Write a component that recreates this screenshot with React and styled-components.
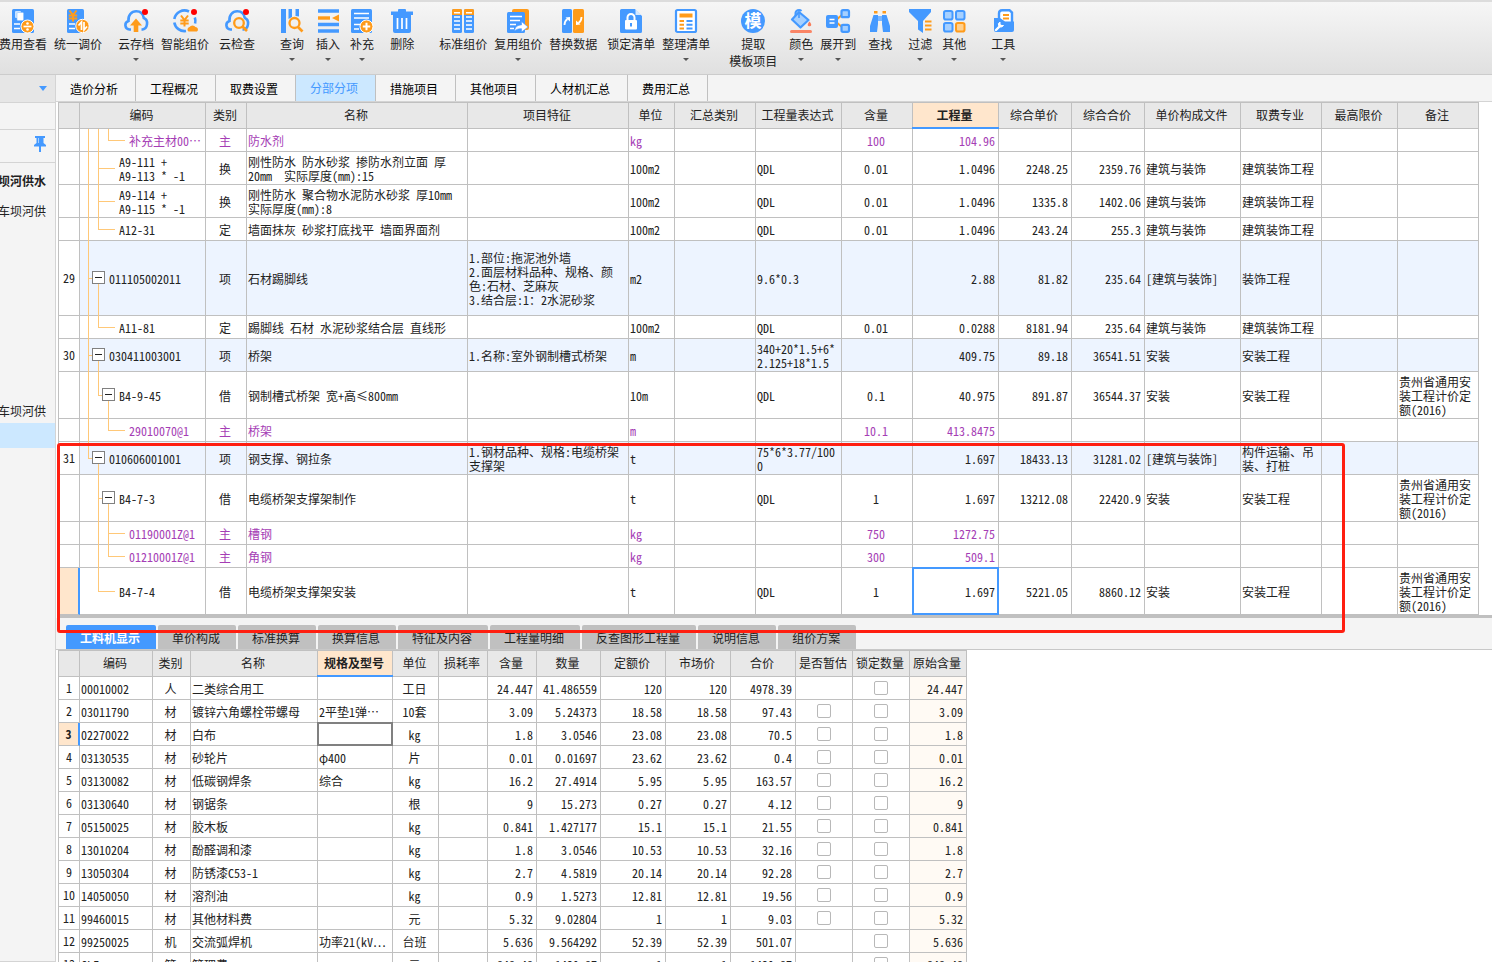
import React, { useState } from 'react'
import styled, { createGlobalStyle, css } from 'styled-components'

const BLUE = '#4499ff'
const ORANGE = '#ff9b1a'

/* ---------- toolbar icons ---------- */

const strokeBlue = { stroke: BLUE, fill: 'none' }
const strokeWhite = { stroke: '#fff', fill: 'none' }
const strokeOrange = { stroke: ORANGE, fill: 'none' }

const cloud = <path d="M7 20.500H5.500a4.400 4.400 0 0 1-1-8.600C3.800 6.500 7.500 2.200 12.200 2.200c4 0 7 2.600 7.600 6.800 5 2 4 10.500-1.300 11.500H17.500" {...strokeBlue} strokeWidth="2.600" />
const redDot = <circle cx="21" cy="3" r="3" fill="#ff0000" />
const yuan = <path d="M-3.500-5.500 0-1 3.500-5.500M0-1V5.500M-4.200-.500H4.200M-4.200 2.500H4.200" {...strokeOrange} strokeWidth="2" />

const icons = {
  fee: <>
    <rect x="1" y="0" width="22" height="24" rx="1.500" fill={BLUE} />
    <rect x="4" y="2" width="6" height="7" rx="1" fill="#cce4ff" />
    <rect x="6" y="3.500" width="6.500" height="8" rx="1" fill="#fff" stroke="#8cc2ff" strokeWidth=".6" />
    <path d="M3 15h6M3 19.500h6" {...strokeWhite} strokeWidth="1.700" />
    <circle cx="16.500" cy="17.500" r="6.500" fill={ORANGE} stroke="#fff" />
    <path d="M12.500 17.500h8" {...strokeWhite} strokeWidth="1.700" />
    <circle cx="16.500" cy="14.500" r="1.300" fill="#fff" /><circle cx="16.500" cy="20.500" r="1.300" fill="#fff" />
  </>,
  price: <>
    <rect x="1" y="0" width="17" height="24" rx="1.500" fill={BLUE} />
    <g transform="translate(7 7)">{yuan}</g>
    <path d="M3 15h6M3 19.500h6" {...strokeWhite} strokeWidth="1.700" />
    <circle cx="16.500" cy="17" r="6.700" fill={ORANGE} stroke="#fff" />
    <path d="M15.500 21v-8l-3 3.500M18 13v8l3-3.500" {...strokeWhite} strokeWidth="1.700" />
  </>,
  cloudSave: <>
    {cloud}
    <path d="M12 9.500 18 16.500H14.300V23H9.700V16.500H6z" fill={ORANGE} />
    {redDot}
  </>,
  smart: <>
    <path d="M16 2.500A10.300 10.300 0 0 0 1.300 10M1.300 13.500A10.300 10.300 0 0 0 13 22M21.800 8.500a10.300 10.300 0 0 1 .3 6" {...strokeBlue} strokeWidth="2.600" />
    <g transform="translate(11.500 12)">{yuan}</g>
    <path d="M15.500 22.500a2.500 2.500 0 0 1 1-4.500 3.600 3.600 0 0 1 6 0 2.500 2.500 0 0 1 1.500 4.500z" fill={ORANGE} />
    {redDot}
  </>,
  cloudCheck: <>
    {cloud}
    <circle cx="14" cy="14" r="6.500" fill="#eee" />
    <circle cx="14" cy="14" r="4.800" {...strokeOrange} strokeWidth="2.300" />
    <path d="m17.500 17.500 4.500 4.500" {...strokeOrange} strokeWidth="2.600" />
    {redDot}
  </>,
  query: <>
    <path d="M1 0h5v24H1zM8.500 0H12v8L8.500 10zM15.500 0H19v7.500l-3.500-.500z" fill={BLUE} />
    <circle cx="14.500" cy="14" r="5" {...strokeOrange} strokeWidth="2.300" />
    <path d="m18 18 4.500 4.500" {...strokeOrange} strokeWidth="2.700" />
  </>,
  insert: <>
    <path d="M2 2h21M2 15.500h21M2 22h21" {...strokeBlue} strokeWidth="3.600" />
    <path d="M2 9h12" {...strokeOrange} strokeWidth="3.400" />
    <path d="M16 9 23 5.500v7z" fill={ORANGE} />
  </>,
  supplement: <>
    <rect x="1" y="0" width="21" height="24" rx="1.500" fill={BLUE} />
    <path d="M4 4.500h15M4 9h15M4 15.500h7M4 20h5" {...strokeWhite} strokeWidth="1.700" />
    <circle cx="16.500" cy="17.500" r="6.500" fill={ORANGE} stroke="#fff" />
    <path d="M12.800 17.500h7.400M16.500 13.800v7.400" {...strokeWhite} strokeWidth="2" />
  </>,
  trash: <>
    <path d="M1 2.500h7V1a1 1 0 0 1 1-1h6a1 1 0 0 1 1 1v1.500h7V6H1zM3 6h18v16a2 2 0 0 1-2 2H5a2 2 0 0 1-2-2z" fill={BLUE} />
    <path d="M7.500 9v11M12 9v11M16.500 9v11" {...strokeWhite} strokeWidth="1.700" />
  </>,
  standard: <>
    <rect x="1" y="0" width="10" height="24" rx="1.500" fill={BLUE} /><rect x="13" y="0" width="10" height="24" rx="1.500" fill={BLUE} />
    <path d="M1 6V1.500Q1 0 2.500 0h7Q11 0 11 1.500V6zM13 6V1.500Q13 0 14.500 0h7Q23 0 23 1.500V6z" fill={ORANGE} />
    <path d="M3 3.700h6M15 3.700h6M3 8h6M15 8h6M3 12h6M15 12h6M3 16h6M15 16h6M3 20h6M15 20h6" {...strokeWhite} strokeWidth="1.500" />
  </>,
  reuse: <>
    <rect x="6" y="0" width="17" height="21" rx="2" fill={ORANGE} />
    <rect x="1" y="3" width="18" height="21" rx="1.500" fill={BLUE} />
    <path d="M4 7.500h12M4 11.500h10M4 15.500h6M4 19.500h4" {...strokeWhite} strokeWidth="1.700" />
    <path d="M8.500 22c.5-4 3-6 7-6v-3.500l6.500 5.500-6.500 5v-3.300c-3 0-5 .5-7 2.300z" fill="#fff" stroke={BLUE} strokeWidth=".6" />
  </>,
  replace: <>
    <rect x="1" y="0" width="10" height="24" rx="1.500" fill={BLUE} /><rect x="12" y="0" width="11" height="24" rx="1.500" fill={ORANGE} />
    <path d="M3.500 16c0-3 .8-4.500 3-6" {...strokeWhite} strokeWidth="1.800" />
    <path d="M4.500 8.500 9 8v4.500z" fill="#fff" />
    <path d="M20.500 8c0 3-.8 4.500-3 6" {...strokeWhite} strokeWidth="1.800" />
    <path d="m19.500 15.500-4.500.5v-4.500z" fill="#fff" />
  </>,
  lock: <>
    <path d="M2.500 0H16l7 7v15.500a1.500 1.500 0 0 1-1.500 1.500h-19A1.500 1.500 0 0 1 1 22.500v-21A1.500 1.500 0 0 1 2.500 0z" fill={BLUE} />
    <path d="M16.500 0 22.500 6h-6z" fill="#d4e8ff" />
    <rect x="6" y="11" width="12" height="9.500" rx="1" fill="#fff" />
    <path d="M8.500 11V8.500a3.500 3.500 0 0 1 7 0V11" {...strokeWhite} strokeWidth="2" />
    <path d="M12 14v3.500" {...strokeBlue} strokeWidth="2" />
  </>,
  arrange: <>
    <rect x="2" y="1" width="20" height="22" rx="1.500" fill="#fff" stroke={BLUE} strokeWidth="2.200" />
    <rect x="5.500" y="4.500" width="13" height="4" fill={ORANGE} />
    <path d="M5.500 12H10M5.500 15.700H10M5.500 19.400H10" {...strokeOrange} strokeWidth="2" />
    <path d="M12.500 12h6M12.500 15.700h6M12.500 19.400h6" {...strokeBlue} strokeWidth="2" />
  </>,
  template: <>
    <circle cx="12" cy="12" r="12" fill={BLUE} />
    <text x="12" y="18" textAnchor="middle" fontSize="17" fontWeight="700" fill="#fff">模</text>
  </>,
  fill: <>
    <path d="M6.500 8V4.500a3.500 3.500 0 0 1 6-2.500" {...strokeBlue} strokeWidth="2" />
    <path d="m10 3 9.500 8-8 7.500-8.500-8z" fill="#a6d0ff" stroke={BLUE} strokeWidth="2.200" strokeLinejoin="round" />
    <path d="M10 3v6" {...strokeBlue} strokeWidth="1.600" />
    <path d="M20.500 12.500c3 3.500 1.500 4.800 0 4.800s-3-1.300 0-4.800z" fill="#f97d5b" />
    <rect x="1" y="21" width="22" height="3" rx="1.500" fill="#fa8566" />
  </>,
  expand: <>
    <path d="M9 12 17 5M9 12l8 7" {...strokeOrange} strokeWidth="2" />
    <rect x="0" y="6" width="12" height="13" rx="2" fill={BLUE} />
    <path d="M3.500 10.500h5M3.500 14h5" {...strokeWhite} strokeWidth="1.600" />
    <rect x="15.500" y="1.200" width="7.500" height="7" rx="1.500" fill="#a6d0ff" stroke={BLUE} strokeWidth="2.200" />
    <rect x="15.500" y="15.800" width="7.500" height="7" rx="1.500" fill="#a6d0ff" stroke={BLUE} strokeWidth="2.200" />
  </>,
  find: <>
    <path d="M5.500 6H10v9l-1 8H2V17zM14 6h4.500L22 17v6h-7l-1-8z" fill={BLUE} />
    <path d="M6 2h3.500v2.500H6zM14.500 2H18v2.500h-3.500z" fill={ORANGE} />
    <path d="M10 7h4v5h-4z" fill="#79b6ff" />
  </>,
  filter: <>
    <path d="M1 0h22v3L15 12v12l-5-3.500V12L1 3z" fill={BLUE} />
    <path d="M17 12.500h6.500M17 16.500h6.500M17 20.500h6.500" {...strokeOrange} strokeWidth="2" />
  </>,
  other: <>
    {[[2, 2], [14, 2], [2, 14]].map(([x, y]) => (
      <rect key={`${x}-${y}`} x={x} y={y} width="8.500" height="8.500" rx="1.800" fill="#a6d0ff" stroke={BLUE} strokeWidth="2" />
    ))}
    <rect x="14" y="14" width="8.500" height="8.500" rx="1.800" fill="#ffd08f" stroke={ORANGE} strokeWidth="2" />
  </>,
  tools: <>
    <path d="M8 12V4.500Q8 1.200 11 1.200h7.500L21 3.500V13" fill="#fff" stroke={BLUE} strokeWidth="2.400" />
    <path d="M12 6h6M12 9.500h6" {...strokeOrange} strokeWidth="2" />
    <path d="M3 9h6l5 3.500h9V21a2 2 0 0 1-2 2H5a2 2 0 0 1-2-2z" fill={BLUE} />
    <path d="M5 21 9.500 16.500" {...strokeWhite} strokeWidth="2.400" strokeLinecap="round" />
    <path d="M9 13v3.500h3.500a3 3 0 0 1-4.500.8A3 3 0 0 1 9 13z" fill="#fff" stroke="#fff" />
  </>,
}

// gap = space in front of the tool
const tools = [
  { label: '费用查看', icon: 'fee', gap: 0 },
  { label: '统一调价', icon: 'price', gap: 7, arrow: true },
  { label: '云存档', icon: 'cloudSave', gap: 16, arrow: true },
  { label: '智能组价', icon: 'smart', gap: 7 },
  { label: '云检查', icon: 'cloudCheck', gap: 10 },
  { label: '查询', icon: 'query', gap: 25, arrow: true },
  { label: '插入', icon: 'insert', gap: 12, arrow: true },
  { label: '补充', icon: 'supplement', gap: 10, arrow: true },
  { label: '删除', icon: 'trash', gap: 16 },
  { label: '标准组价', icon: 'standard', gap: 25 },
  { label: '复用组价', icon: 'reuse', gap: 7, arrow: true },
  { label: '替换数据', icon: 'replace', gap: 7 },
  { label: '锁定清单', icon: 'lock', gap: 10 },
  { label: '整理清单', icon: 'arrange', gap: 7, arrow: true },
  { label: '提取', second: '模板项目', icon: 'template', gap: 19 },
  { label: '颜色', icon: 'fill', gap: 12, arrow: true },
  { label: '展开到', icon: 'expand', gap: 7, arrow: true },
  { label: '查找', icon: 'find', gap: 12 },
  { label: '过滤', icon: 'filter', gap: 16, arrow: true },
  { label: '其他', icon: 'other', gap: 10, arrow: true },
  { label: '工具', icon: 'tools', gap: 25, arrow: true },
]

const pageTabs = ['造价分析', '工程概况', '取费设置', '分部分项', '措施项目', '其他项目', '人材机汇总', '费用汇总']
const detailTabs = ['工料机显示', '单价构成', '标准换算', '换算信息', '特征及内容', '工程量明细', '反查图形工程量', '说明信息', '组价方案']

/* ---------- upper grid ---------- */

const itemCols = [
  { title: '', width: 21, align: 'center' },
  { title: '编码', width: 126 },
  { title: '类别', width: 41, align: 'center' },
  { title: '名称', width: 221 },
  { title: '项目特征', width: 161 },
  { title: '单位', width: 46 },
  { title: '汇总类别', width: 81 },
  { title: '工程量表达式', width: 86 },
  { title: '含量', width: 71, align: 'center' },
  { title: '工程量', width: 86, align: 'right' },
  { title: '综合单价', width: 73, align: 'right' },
  { title: '综合合价', width: 73, align: 'right' },
  { title: '单价构成文件', width: 96 },
  { title: '取费专业', width: 81 },
  { title: '最高限价', width: 76 },
  { title: '备注', width: 81 },
]

const REMARK = '贵州省通用安\n装工程计价定\n额(2016)'

// guides: one entry per tree level, [level, 'full' | 'end' | 'start']
// cells: 类别 名称 项目特征 单位 汇总类别 表达式 含量 工程量 单价 合价 构成文件 专业 限价 备注
const itemRows = [
  { h: 23, level: 3, kind: 'main', code: '补充主材00⋯', guides: [[1, 'full'], [2, 'full'], [3, 'end']],
    cells: ['主', '防水剂', '', 'kg', '', '', '100', '104.96', '', '', '', '', '', ''] },
  { h: 33, level: 2, code: 'A9-111 +\nA9-113 * -1', guides: [[1, 'full'], [2, 'full']],
    cells: ['换', '刚性防水 防水砂浆 掺防水剂立面 厚\n20mm  实际厚度(mm):15', '', '100m2', '', 'QDL', '0.01', '1.0496', '2248.25', '2359.76', '建筑与装饰', '建筑装饰工程', '', ''] },
  { h: 33, level: 2, code: 'A9-114 +\nA9-115 * -1', guides: [[1, 'full'], [2, 'full']],
    cells: ['换', '刚性防水 聚合物水泥防水砂浆 厚10mm\n实际厚度(mm):8', '', '100m2', '', 'QDL', '0.01', '1.0496', '1335.8', '1402.06', '建筑与装饰', '建筑装饰工程', '', ''] },
  { h: 23, level: 2, code: 'A12-31', guides: [[1, 'full'], [2, 'end']],
    cells: ['定', '墙面抹灰 砂浆打底找平 墙面界面剂', '', '100m2', '', 'QDL', '0.01', '1.0496', '243.24', '255.3', '建筑与装饰', '建筑装饰工程', '', ''] },
  { h: 75, no: '29', level: 1, kind: 'item', open: true, code: '011105002011', guides: [[1, 'full'], [2, 'start']],
    cells: ['项', '石材踢脚线', '1.部位:拖泥池外墙\n2.面层材料品种、规格、颜\n色:石材、芝麻灰\n3.结合层:1：2水泥砂浆', 'm2', '', '9.6*0.3', '', '2.88', '81.82', '235.64', '[建筑与装饰]', '装饰工程', '', ''] },
  { h: 23, level: 2, code: 'A11-81', guides: [[1, 'full'], [2, 'end']],
    cells: ['定', '踢脚线 石材 水泥砂浆结合层 直线形', '', '100m2', '', 'QDL', '0.01', '0.0288', '8181.94', '235.64', '建筑与装饰', '建筑装饰工程', '', ''] },
  { h: 33, no: '30', level: 1, kind: 'item', open: true, code: '030411003001', guides: [[1, 'full'], [2, 'start']],
    cells: ['项', '桥架', '1.名称:室外钢制槽式桥架', 'm', '', '340+20*1.5+6*\n2.125+18*1.5', '', '409.75', '89.18', '36541.51', '安装', '安装工程', '', ''] },
  { h: 47, level: 2, open: true, code: 'B4-9-45', guides: [[1, 'full'], [2, 'end'], [3, 'start']],
    cells: ['借', '钢制槽式桥架 宽+高≤800mm', '', '10m', '', 'QDL', '0.1', '40.975', '891.87', '36544.37', '安装', '安装工程', '', REMARK] },
  { h: 23, level: 3, kind: 'main', code: '29010070@1', guides: [[1, 'full'], [3, 'end']],
    cells: ['主', '桥架', '', 'm', '', '', '10.1', '413.8475', '', '', '', '', '', ''] },
  { h: 33, no: '31', level: 1, kind: 'item', open: true, code: '010606001001', guides: [[1, 'end'], [2, 'start']],
    cells: ['项', '钢支撑、钢拉条', '1.钢材品种、规格:电缆桥架\n支撑架', 't', '', '75*6*3.77/100\n0', '', '1.697', '18433.13', '31281.02', '[建筑与装饰]', '构件运输、吊\n装、打桩', '', ''] },
  { h: 47, level: 2, open: true, code: 'B4-7-3', guides: [[2, 'full'], [3, 'start']],
    cells: ['借', '电缆桥架支撑架制作', '', 't', '', 'QDL', '1', '1.697', '13212.08', '22420.9', '安装', '安装工程', '', REMARK] },
  { h: 23, level: 3, kind: 'main', code: '01190001Z@1', guides: [[2, 'full'], [3, 'full']],
    cells: ['主', '槽钢', '', 'kg', '', '', '750', '1272.75', '', '', '', '', '', ''] },
  { h: 23, level: 3, kind: 'main', code: '01210001Z@1', guides: [[2, 'full'], [3, 'end']],
    cells: ['主', '角钢', '', 'kg', '', '', '300', '509.1', '', '', '', '', '', ''] },
  { h: 47, level: 2, current: true, code: 'B4-7-4', guides: [[2, 'end']],
    cells: ['借', '电缆桥架支撑架安装', '', 't', '', 'QDL', '1', '1.697', '5221.05', '8860.12', '安装', '安装工程', '', REMARK] },
]

/* ---------- lower grid ---------- */

const resourceCols = [
  { title: '', width: 21, align: 'center' },
  { title: '编码', width: 73 },
  { title: '类别', width: 38, align: 'center' },
  { title: '名称', width: 127 },
  { title: '规格及型号', width: 75 },
  { title: '单位', width: 46, align: 'center' },
  { title: '损耗率', width: 49 },
  { title: '含量', width: 49, align: 'right' },
  { title: '数量', width: 64, align: 'right' },
  { title: '定额价', width: 65, align: 'right' },
  { title: '市场价', width: 65, align: 'right' },
  { title: '合价', width: 65, align: 'right' },
  { title: '是否暂估', width: 57, align: 'center' },
  { title: '锁定数量', width: 57, align: 'center' },
  { title: '原始含量', width: 57, align: 'right' },
]

// code, kind, name, spec, unit, content, amount, quota price, market price, total, can be estimated
const resources = [
  ['00010002', '人', '二类综合用工', '', '工日', '24.447', '41.486559', '120', '120', '4978.39', false],
  ['03011790', '材', '镀锌六角螺栓带螺母', '2平垫1弹⋯', '10套', '3.09', '5.24373', '18.58', '18.58', '97.43', true],
  ['02270022', '材', '白布', '', 'kg', '1.8', '3.0546', '23.08', '23.08', '70.5', true],
  ['03130535', '材', '砂轮片', 'φ400', '片', '0.01', '0.01697', '23.62', '23.62', '0.4', true],
  ['03130082', '材', '低碳钢焊条', '综合', 'kg', '16.2', '27.4914', '5.95', '5.95', '163.57', true],
  ['03130640', '材', '钢锯条', '', '根', '9', '15.273', '0.27', '0.27', '4.12', true],
  ['05150025', '材', '胶木板', '', 'kg', '0.841', '1.427177', '15.1', '15.1', '21.55', true],
  ['13010204', '材', '酚醛调和漆', '', 'kg', '1.8', '3.0546', '10.53', '10.53', '32.16', true],
  ['13050304', '材', '防锈漆C53-1', '', 'kg', '2.7', '4.5819', '20.14', '20.14', '92.28', true],
  ['14050050', '材', '溶剂油', '', 'kg', '0.9', '1.5273', '12.81', '12.81', '19.56', true],
  ['99460015', '材', '其他材料费', '', '元', '5.32', '9.02804', '1', '1', '9.03', true],
  ['99250025', '机', '交流弧焊机', '功率21(kV⋯', '台班', '5.636', '9.564292', '52.39', '52.39', '501.07', false],
  ['GLF', '管', '管理费', '', '元', '848.48', '1439.87', '1', '1', '1439.87', false],
]

function Toolbar() {
  return (
    <ToolbarStyles>
      {tools.map(t => (
        <ToolButton key={t.label} type="button" $gap={t.gap}>
          <svg width="24" height="24" viewBox="0 0 24 24" aria-hidden="true">{icons[t.icon]}</svg>
          <span>{t.label}</span>
          {t.second && <span>{t.second}</span>}
          {t.arrow && <Caret />}
        </ToolButton>
      ))}
    </ToolbarStyles>
  )
}

function Header({ cols, active }) {
  return (
    <>
      <colgroup>
        {cols.map((c, i) => <col key={i} width={c.width} />)}
      </colgroup>
      <thead>
        <tr>
          {cols.map((c, i) => <HeadCell key={i} scope="col" $active={c.title === active}>{c.title}</HeadCell>)}
        </tr>
      </thead>
    </>
  )
}

function TreeCode({ row }) {
  const [open, setOpen] = useState(true)
  return (
    <TreeCell $level={row.level}>
      {row.guides.map(([level, part]) => <Guide key={level} $level={level} $part={part} />)}
      <Branch $level={row.level} />
      {row.open && (
        <Expander type="button" aria-label={row.code} aria-expanded={open} $level={row.level} onClick={() => setOpen(!open)}>
          <svg width="7" height="7" viewBox="0 0 7 7"><path d={open ? 'M0 3.500h7' : 'M0 3.500h7M3.500 0v7'} stroke="#222" /></svg>
        </Expander>
      )}
      {row.code}
    </TreeCell>
  )
}

function ItemGrid() {
  return (
    <Grid $width={1421}>
      <Header cols={itemCols} active="工程量" />
      <tbody>
        {itemRows.map(row => (
          <Row key={row.code} $height={row.h} $kind={row.kind}>
            <NumberCell $current={row.current}>{row.no}</NumberCell>
            <TreeCode row={row} />
            {row.cells.map((text, i) => (
              <Cell key={i} $align={itemCols[i + 2].align} $frame={row.current && i === 7 ? BLUE : ''}>{text}</Cell>
            ))}
          </Row>
        ))}
      </tbody>
    </Grid>
  )
}

function ResourceGrid() {
  return (
    <Grid $width={909}>
      <Header cols={resourceCols} active="规格及型号" />
      <tbody>
        {resources.map((r, n) => {
          const estimate = r[10]
          return (
            <Row key={r[0]} $height={23}>
              <NumberCell $current={n === 2}>{n + 1}</NumberCell>
              {r.slice(0, 5).map((text, i) => (
                <Cell key={i} $align={resourceCols[i + 1].align} $frame={n === 2 && i === 3 ? '#808080' : ''}>{text}</Cell>
              ))}
              <Cell />
              {r.slice(5, 10).map((text, i) => <Cell key={i} $align="right">{text}</Cell>)}
              <CheckCell>{estimate && <Check type="checkbox" aria-label={`是否暂估 ${r[2]}`} />}</CheckCell>
              <CheckCell><Check type="checkbox" aria-label={`锁定数量 ${r[2]}`} /></CheckCell>
              <Cell $align="right" $tint>{r[5]}</Cell>
            </Row>
          )
        })}
      </tbody>
    </Grid>
  )
}

export default function App() {
  const [page, setPage] = useState('分部分项')
  const [detail, setDetail] = useState('工料机显示')

  return (
    <>
      <GlobalStyle />
      <Window>
        <Toolbar />
        <Body>
          <Sidebar>
            <SideTop><SideToggle type="button" aria-label="展开"><Triangle /></SideToggle></SideTop>
            <SideBlank />
            <SidePin>
              <SideToggle type="button" aria-label="固定">
                <svg width="12" height="16" viewBox="0 0 12 16" aria-hidden="true">
                  <path d="M1 0h10v2H9.500v5L12 9v1.500H0V9l2.500-2V2H1z" fill={BLUE} />
                  <path d="M6 10v6" stroke={BLUE} strokeWidth="2" />
                  <path d="M4.500 2v5" stroke="#a6d0ff" />
                </svg>
              </SideToggle>
            </SidePin>
            <SideTree>
              <SideNode href="#project" $bold>坝河供水</SideNode>
              <SideNode href="#unit-1">车坝河供</SideNode>
              <SideFill />
              <SideNode href="#unit-2">车坝河供</SideNode>
              <SideSelected />
            </SideTree>
          </Sidebar>
          <Workspace>
            <PageTabs>
              {pageTabs.map(t => (
                <PageTab key={t} type="button" $active={t === page} onClick={() => setPage(t)}>{t}</PageTab>
              ))}
            </PageTabs>
            <GridPane><ItemGrid /></GridPane>
            <Splitter />
            <DetailTabs>
              {detailTabs.map(t => (
                <DetailTab key={t} type="button" $active={t === detail} onClick={() => setDetail(t)}>{t}</DetailTab>
              ))}
            </DetailTabs>
            <DetailPane><ResourceGrid /></DetailPane>
            <Marker />
          </Workspace>
        </Body>
      </Window>
    </>
  )
}

const GlobalStyle = createGlobalStyle`
  * {
    box-sizing: border-box;
  }

  body {
    margin: 0;
    overflow: hidden;
    background: #fff;
  }

  body, button, table {
    font-family: "Noto Sans CJK SC", sans-serif;
    font-size: 12px;
    line-height: 14px;
    color: #222;
  }

  button {
    border: none;
    padding: 0;
    background: transparent;
  }
`

const Window = styled.div`
  display: flex;
  flex-direction: column;
  height: 100vh;
  overflow: hidden;
`

const ToolbarStyles = styled.div`
  display: flex;
  align-items: flex-start;
  flex: none;
  height: 75px;
  padding-top: 7px;
  border-top: 2px solid #dcdcdc;
  border-bottom: 1px solid #cccccc;
  background: linear-gradient(#f6f6f6, #e0e0e0);
`

const ToolButton = styled.button`
  display: flex;
  flex-direction: column;
  align-items: center;
  flex: none;
  margin-left: ${p => p.$gap}px;
  white-space: nowrap;

  &:first-child {
    margin-left: -1px;
  }

  svg {
    margin-bottom: 4px;
    overflow: visible;
  }

  span + span {
    margin-top: 3px;
  }
`

const Caret = styled.i`
  margin-top: 7px;
  border: 3px solid transparent;
  border-top-color: #555;
  border-bottom: 0;
`

const Body = styled.div`
  display: flex;
  flex: 1;
  min-height: 0;
`

const Sidebar = styled.aside`
  display: flex;
  flex-direction: column;
  flex: none;
  width: 56px;
  border-right: 1px solid #d4d4d4;
  border-bottom: 1px solid #d4d4d4;
  background: #f4f4f4;
  overflow: hidden;
`

const SideTop = styled.div`
  display: flex;
  align-items: center;
  justify-content: flex-end;
  height: 28px;
  padding-right: 8px;
  border-bottom: 1px solid #d4d4d4;
  background: #e6e6e6;
`

const SideBlank = styled.div`
  height: 27px;
  border-bottom: 1px solid #d4d4d4;
`

const SidePin = styled(SideTop)`
  height: 33px;
  padding-right: 9px;
  padding-bottom: 4px;
  background: transparent;
`

const SideToggle = styled.button`
  display: flex;
`

const Triangle = styled.i`
  border: 4px solid transparent;
  border-top: 5px solid ${BLUE};
  border-bottom: 0;
`

const SideTree = styled.nav`
  display: flex;
  flex-direction: column;
  padding-top: 4px;
`

const SideNode = styled.a`
  display: flex;
  justify-content: flex-end;
  align-items: center;
  height: 30px;
  padding-right: 9px;
  padding-bottom: 2px;
  color: #222;
  font-weight: ${p => (p.$bold ? 700 : 400)};
  text-decoration: none;
  white-space: nowrap;
`

const SideFill = styled.div`
  height: 170px;
`

const SideSelected = styled.div`
  height: 25px;
  margin-top: -4px;
  background: #cce8ff;
`

const Workspace = styled.main`
  position: relative;
  display: flex;
  flex-direction: column;
  flex: 1;
  min-width: 0;
`

const PageTabs = styled.div`
  display: flex;
  flex: none;
  height: 27px;
  border-bottom: 1px solid #d4d4d4;
  background: #f4f4f4;
`

const PageTab = styled.button`
  flex: none;
  padding: 2px 17px 0 14px;
  border-right: 1px solid #c0c0c0;
  color: #000;

  ${p => p.$active && css`
    background: #cce8ff;
    color: ${BLUE};
    padding-top: 0;
  `}
`

const GridPane = styled.div`
  flex: none;
  padding-left: 2px;
  overflow: hidden;
`

const DetailPane = styled(GridPane)`
  flex: 1;
  min-height: 0;
`

const Grid = styled.table`
  width: ${p => p.$width}px;
  table-layout: fixed;
  border-collapse: separate;
  border-spacing: 0;
  border-left: 1px solid #c0c0c0;
`

const HeadCell = styled.th`
  position: relative;
  height: 27px;
  padding: 0 2px 2px 0;
  border-top: 1px solid #c0c0c0;
  border-right: 1px solid #c0c0c0;
  border-bottom: 1px solid #c0c0c0;
  background: #e8e8e8;
  font-weight: 400;
  white-space: nowrap;

  ${p => p.$active && css`
    background: #ffe6cc;
    font-weight: 700;

    &::after {
      content: '';
      position: absolute;
      inset: auto -1px -1px;
      height: 2px;
      background: ${BLUE};
    }
  `}
`

const Cell = styled.td`
  position: relative;
  padding: 1px 3px 0 1px;
  border-right: 1px solid #c0c0c0;
  border-bottom: 1px solid #c0c0c0;
  background: ${p => (p.$tint ? '#fffaf4' : 'transparent')};
  text-align: ${p => p.$align || 'left'};
  white-space: pre;
  /* half-width latin and digits, two per ideograph */
  font-feature-settings: 'hwid';

  ${p => p.$frame && css`
    &::after {
      content: '';
      position: absolute;
      inset: -1px;
      border: 2px solid ${p.$frame};
    }
  `}
`

const NumberCell = styled(Cell)`
  padding: 0;
  background: #fff;
  text-align: center;

  ${p => p.$current && css`
    background: #ffe6cc;
    font-weight: 700;
    border-right: 2px solid ${BLUE};
  `}
`

const Row = styled.tr`
  height: ${p => p.$height}px;
  background: ${p => (p.$kind === 'item' ? '#edf4ff' : '#fff')};
  color: ${p => (p.$kind === 'main' ? '#a53db5' : '#222')};
`

const TreeCell = styled(Cell)`
  padding-left: ${p => 19 + p.$level * 10}px;
`

const Guide = styled.i`
  position: absolute;
  left: ${p => p.$level * 10 - 2}px;
  top: ${p => (p.$part === 'start' ? '50%' : '0')};
  bottom: ${p => (p.$part === 'end' ? '50%' : '-1px')};
  border-left: 1px solid #ffc878;
`

const Branch = styled.i`
  position: absolute;
  left: ${p => p.$level * 10 - 2}px;
  top: 50%;
  width: ${p => (p.$level === 1 ? 6 : 17)}px;
  border-top: 1px solid #ffc878;
`

const Expander = styled.button`
  position: absolute;
  left: ${p => p.$level * 10 + 2}px;
  top: calc(50% - 7px);
  display: flex;
  align-items: center;
  justify-content: center;
  width: 13px;
  height: 13px;
  border: 1px solid #808080;
  background: #fff;
`

const CheckCell = styled(Cell)`
  padding: 0;
  text-align: center;
`

const Check = styled.input`
  appearance: none;
  display: block;
  width: 14px;
  height: 14px;
  margin: 0 auto;
  border: 1px solid #b8b8b8;
  border-radius: 2px;
  background: #fff;
`

const Splitter = styled.div`
  flex: none;
  height: 3px;
  margin-left: 2px;
  background: #c0c0c0;
`

const DetailTabs = styled.div`
  display: flex;
  flex: none;
  gap: 2px;
  height: 32px;
  padding: 7px 0 0 10px;
  border-bottom: 1px solid #c8c8c8;
  background: #f4f4f4;
`

const DetailTab = styled.button`
  flex: none;
  padding: 2px 16px 0 14px;
  border-radius: 2px 2px 0 0;
  background: #c0c0c0;

  ${p => p.$active && css`
    background: ${BLUE};
    color: #fff;
    font-weight: 700;
  `}
`

/* red frame drawn round item 31 */
const Marker = styled.div`
  position: absolute;
  left: 1px;
  top: 368px;
  width: 1288px;
  height: 190px;
  border: 3px solid #ff1e10;
  border-radius: 3px;
  pointer-events: none;
`
